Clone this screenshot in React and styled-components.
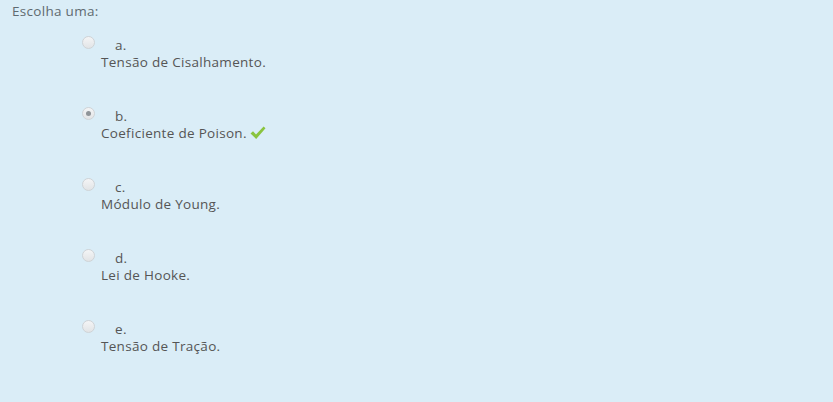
import React from 'react';
import styled, { createGlobalStyle } from 'styled-components';

const GlobalStyle = createGlobalStyle`
  html, body {
    margin: 0;
    padding: 0;
    background: #daedf7;
  }
  body {
    font-family: "Open Sans", "Liberation Sans", sans-serif;
    font-size: 13.5px;
    letter-spacing: 0.3px;
    color: #555555;
  }
`;

const Wrapper = styled.div`
  width: 833px;
  height: 402px;
  background: #daedf7;
  padding: 2px 12px 0;
  box-sizing: border-box;
`;

const Prompt = styled.div`
  line-height: 18px;
  color: #5f6a70;
`;

const AnswerList = styled.div`
  display: flex;
  flex-direction: column;
  gap: 36px;
  margin-top: 16px;
  padding-left: 70px;
`;

const Option = styled.div`
  display: flex;
  flex-direction: column;
`;

const TopLine = styled.div`
  display: flex;
  align-items: flex-start;
  gap: 20px;
  height: 17px;
`;

const Radio = styled.span`
  position: relative;
  width: 11px;
  height: 11px;
  border-radius: 50%;
  border: 1px solid #cfd3d6;
  background: linear-gradient(#f4f5f6, #e2e4e6);
  flex: none;

  &::after {
    content: '';
    display: ${p => (p.checked ? 'block' : 'none')};
    position: absolute;
    left: 3px;
    top: 3px;
    width: 5px;
    height: 5px;
    border-radius: 50%;
    background: #8f9498;
  }
`;

const Letter = styled.span`
  line-height: 18px;
`;

const AnswerText = styled.div`
  padding-left: 19px;
  line-height: 18px;
  display: flex;
  align-items: center;
  gap: 3px;
`;

const Check = () => (
  <svg width="16" height="14" viewBox="0 0 16 14">
    <path d="M0.5 7.5 L3 5.2 L6 8.6 L13.6 0.5 L15.5 2.2 L6.2 13 Z" fill="#8ac43f" />
  </svg>
);

const answers = [
  { letter: 'a.', text: 'Tensão de Cisalhamento.' },
  { letter: 'b.', text: 'Coeficiente de Poison.', checked: true },
  { letter: 'c.', text: 'Módulo de Young.' },
  { letter: 'd.', text: 'Lei de Hooke.' },
  { letter: 'e.', text: 'Tensão de Tração.' },
];

export default function App() {
  return (
    <>
      <GlobalStyle />
      <Wrapper>
        <Prompt>Escolha uma:</Prompt>
        <AnswerList>
          {answers.map(a => (
            <Option key={a.letter}>
              <TopLine>
                <Radio checked={a.checked} />
                <Letter>{a.letter}</Letter>
              </TopLine>
              <AnswerText>
                {a.text}
                {a.checked && <Check />}
              </AnswerText>
            </Option>
          ))}
        </AnswerList>
      </Wrapper>
    </>
  );
}
